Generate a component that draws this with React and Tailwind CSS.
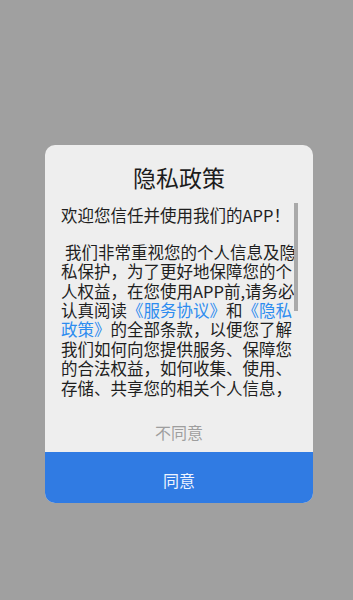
import React from 'react';

const font = { fontFamily: '"Noto Sans CJK SC", "Noto Sans", sans-serif' };

export default function App() {
    return (
        <div className="w-[353px] h-[600px] bg-[#a0a0a0] pt-[145px] pl-[45px]" style={font}>
            <div className="w-[268px] h-[358px] rounded-[10px] bg-[#eeeeee] overflow-hidden flex flex-col">
                {/* Title */}
                <div className="h-[58px] pt-[17px] text-center text-[23px] leading-[30px] text-[#1c1c1c]">
                    隐私政策
                </div>

                {/* Scrollable content */}
                <div className="relative h-[195px] overflow-hidden pl-[16px]">
                    <div className="w-[240px] pt-[3px] text-[16.5px] leading-[19.4px] text-[#1e1e1e]">
                        <p>欢迎您信任并使用我们的APP！</p>
                        <p className="mt-[17.4px] indent-[4px]">
                            我们非常重视您的个人信息及隐私保护，为了更好地保障您的个人权益，在您使用APP前,请务必认真阅读
                            <span className="text-[#2d8cf0]">《服务协议》</span>和
                            <span className="text-[#2d8cf0]">《隐私政策》</span>
                            的全部条款，以便您了解我们如何向您提供服务、保障您的合法权益，如何收集、使用、存储、共享您的相关个人信息，如何管理您的个人信息，以及您享有的相关权利。
                        </p>
                    </div>
                    <div className="absolute left-[249px] top-0 w-[4px] h-[108px] bg-[#a9a9a9]" />
                </div>

                {/* Disagree */}
                <div className="h-[54px] pt-[24px] text-center text-[16px] leading-[20px] text-[#9e9e9e]">
                    不同意
                </div>

                {/* Agree */}
                <div className="flex-1 bg-[#307be3] pt-[18px] text-center text-[16px] leading-[20px] text-[#eef4ff]">
                    同意
                </div>
            </div>
        </div>
    );
}
